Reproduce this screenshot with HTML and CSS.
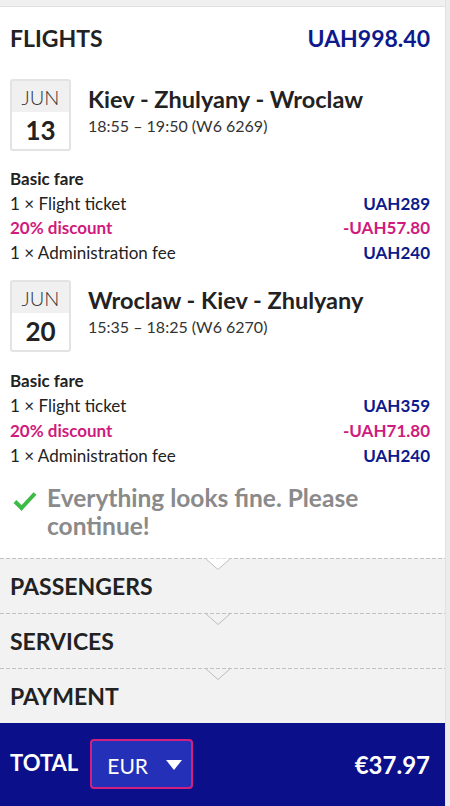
FILE: index.html
```html
<!DOCTYPE html>
<html>
<head>
<meta charset="utf-8">
<link rel="stylesheet" href="styles.css">
</head>
<body>
<div class="page">
  <div class="main">
    <div class="card">
      <div class="head">
        <span class="head-title">FLIGHTS</span>
        <span class="head-amount">UAH998.40</span>
      </div>

      <div class="flight">
        <div class="date">
          <div class="date-month">JUN</div>
          <div class="date-day">13</div>
        </div>
        <div class="flight-info">
          <div class="route">Kiev - Zhulyany - Wroclaw</div>
          <div class="time">18:55 – 19:50 (W6 6269)</div>
        </div>
      </div>
      <div class="fare">
        <div class="fare-title">Basic fare</div>
        <div class="row"><span>1 × Flight ticket</span><span class="amt">UAH289</span></div>
        <div class="row disc"><span>20% discount</span><span>-UAH57.80</span></div>
        <div class="row"><span>1 × Administration fee</span><span class="amt">UAH240</span></div>
      </div>

      <div class="flight second">
        <div class="date">
          <div class="date-month">JUN</div>
          <div class="date-day">20</div>
        </div>
        <div class="flight-info">
          <div class="route">Wroclaw - Kiev - Zhulyany</div>
          <div class="time">15:35 – 18:25 (W6 6270)</div>
        </div>
      </div>
      <div class="fare fare-second">
        <div class="fare-title">Basic fare</div>
        <div class="row"><span>1 × Flight ticket</span><span class="amt">UAH359</span></div>
        <div class="row disc"><span>20% discount</span><span>-UAH71.80</span></div>
        <div class="row"><span>1 × Administration fee</span><span class="amt">UAH240</span></div>
      </div>

      <div class="ok">
        <svg class="check" width="24" height="20" viewBox="0 0 24 20"><path d="M2 10.5 L8.5 17 L22 2.5" fill="none" stroke="#3dbb47" stroke-width="4"/></svg>
        <div class="ok-text">Everything looks fine. Please continue!</div>
      </div>
    </div>

    <div class="section">
      <svg class="chev" width="26" height="13" viewBox="0 0 26 13"><path d="M0 0.5 L13 12 L26 0.5 Z" fill="#fff"/><path d="M0.5 0.5 L13 11.5 L25.5 0.5" fill="none" stroke="#bdbdbd" stroke-width="1"/></svg>
      <span>PASSENGERS</span>
    </div>
    <div class="section">
      <svg class="chev" width="26" height="13" viewBox="0 0 26 13"><path d="M0.5 0.5 L13 11.5 L25.5 0.5" fill="none" stroke="#bdbdbd" stroke-width="1"/></svg>
      <span>SERVICES</span>
    </div>
    <div class="section">
      <svg class="chev" width="26" height="13" viewBox="0 0 26 13"><path d="M0.5 0.5 L13 11.5 L25.5 0.5" fill="none" stroke="#bdbdbd" stroke-width="1"/></svg>
      <span>PAYMENT</span>
    </div>

    <div class="footer">
      <span class="total">TOTAL</span>
      <div class="select">
        <span>EUR</span>
        <svg width="16" height="10" viewBox="0 0 16 10"><path d="M0 0 L16 0 L8 10 Z" fill="#fff"/></svg>
      </div>
      <span class="sum">€37.97</span>
    </div>
  </div>
  <div class="scroll"></div>
</div>
</body>
</html>
```
FILE: styles.css
```css
* { box-sizing: border-box; }
html, body { margin: 0; padding: 0; }
body {
  font-family: Lato, "Open Sans", sans-serif;
  color: #222;
  background: #f0f0f0;
  width: 450px;
  height: 806px;
  overflow: hidden;
}
.page {
  display: flex;
  height: 806px;
}
.main {
  width: 445px;
  padding-top: 6px;
  display: flex;
  flex-direction: column;
}
.scroll {
  width: 5px;
  background: #ececec;
  border-left: 1px solid #e2e2e2;
}
.card {
  background: #fff;
  border-top: 1px solid #e0e0e0;
  padding: 17px 15px 18px 10px;
}
.head {
  display: flex;
  justify-content: space-between;
  align-items: center;
  height: 28px;
  font-weight: 700;
  font-size: 23px;
}
.head-amount { color: #0d1a8c; }

.flight {
  display: flex;
  margin-top: 27px;
}
.flight.second { margin-top: 15px; }
.date {
  width: 61px;
  height: 72px;
  border: 2px solid #e3e3e3;
  border-radius: 3px;
  display: flex;
  flex-direction: column;
}
.date-month {
  height: 31px;
  background: #f0f0f0;
  font-size: 20px;
  font-weight: 300;
  text-align: center;
  line-height: 33px;
  color: #333;
}
.date-day {
  flex: 1;
  font-size: 26px;
  font-weight: 700;
  text-align: center;
  line-height: 37px;
}
.flight-info {
  margin-left: 17px;
  padding-top: 6px;
}
.route {
  font-size: 23.5px;
  font-weight: 700;
  line-height: 28px;
}
.time {
  font-size: 16px;
  line-height: 24px;
  color: #333;
  margin-top: 1px;
}

.fare {
  margin-top: 16px;
  font-size: 17px;
  line-height: 24.5px;
}
.fare-second {
  margin-top: 17px;
  line-height: 24.9px;
}
.fare-title { font-weight: 700; }
.row {
  display: flex;
  justify-content: space-between;
}
.amt { color: #0d1a8c; font-weight: 700; }
.disc { color: #cf1b7d; font-weight: 700; }

.ok {
  display: flex;
  margin-top: 15px;
}
.check {
  margin-top: 7px;
  margin-left: 3px;
  flex: none;
}
.ok-text {
  margin-left: 10px;
  font-size: 24.5px;
  font-weight: 700;
  line-height: 28px;
  color: #8a8a8a;
}

.section {
  position: relative;
  height: 55px;
  background-color: #f2f2f2;
  background-image: linear-gradient(to right, #c2c2c2 0 4px, transparent 4px 6px);
  background-size: 6px 1px;
  background-repeat: repeat-x;
  background-position: 0 0;
  padding-left: 10px;
  font-size: 23px;
  font-weight: 700;
  line-height: 57px;
  color: #222;
}
.chev {
  position: absolute;
  left: 205px;
  top: 0;
}

.footer {
  flex: 1;
  background: #0b108a;
  display: flex;
  align-items: center;
  padding: 0 15px 0 10px;
  color: #fff;
}
.total {
  font-size: 22px;
  font-weight: 700;
  margin-bottom: 4px;
}
.select {
  margin-left: 12px;
  width: 103px;
  height: 50px;
  background: #2530b9;
  border: 2px solid #d3207f;
  border-radius: 4px;
  display: flex;
  align-items: center;
  justify-content: space-between;
  padding: 2px 9px 0 15px;
  font-size: 21px;
}
.sum {
  margin-left: auto;
  font-size: 24px;
  font-weight: 700;
  margin-top: 1px;
}
```
